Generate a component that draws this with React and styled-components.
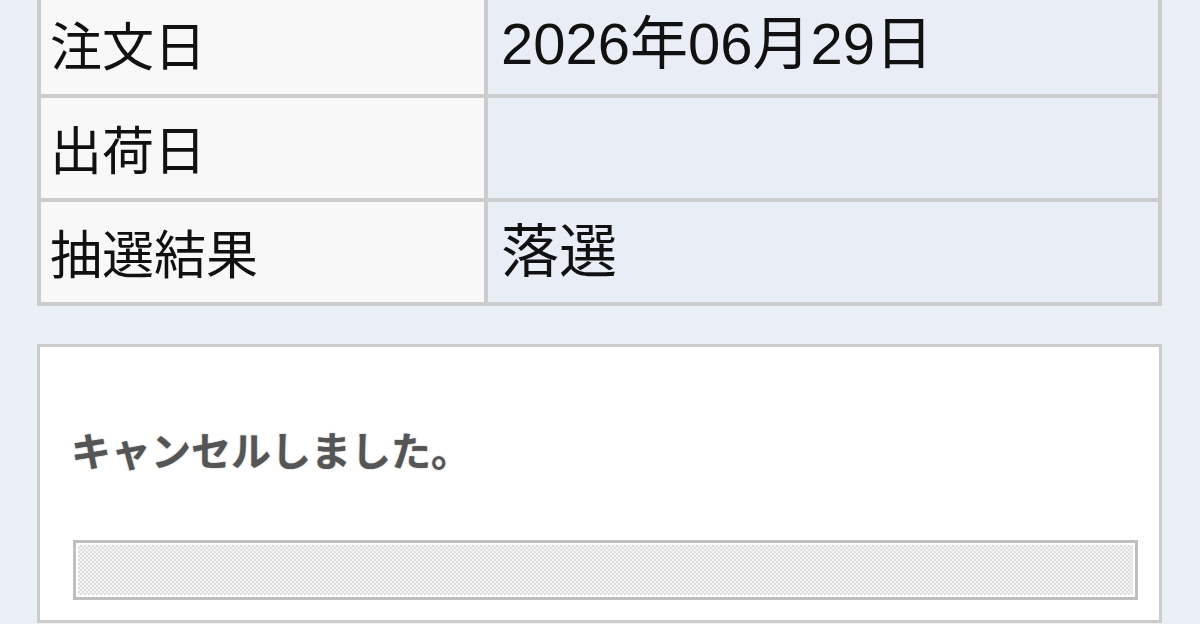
import styled, { createGlobalStyle } from 'styled-components';

const GlobalStyle = createGlobalStyle`
  html, body {
    margin: 0;
    padding: 0;
    background-color: #ebeff6;
  }
  body {
    font-family: 'Noto Sans CJK JP', sans-serif;
  }
`;

const Page = styled.div`
  height: 624px;
  overflow: hidden;
  padding: 0 38px 0 37px;
  box-sizing: border-box;
`;

const InfoTable = styled.table`
  width: 100%;
  margin-top: -10px;
  border: 4px solid #cccccc;
  border-spacing: 0;
  table-layout: fixed;
`;

const Row = styled.tr`
  &:not(:last-child) > * {
    border-bottom: 4px solid #cccccc;
  }
`;

const LabelCell = styled.th`
  width: 422px;
  height: 100px;
  padding: 0 12px 0 9px;
  box-sizing: content-box;
  background-color: #f8f8f8;
  border-right: 4px solid #cccccc;
  text-align: left;
  font-weight: 400;
  font-size: 52px;
  color: #111;
  line-height: 1;
`;

const ValueCell = styled.td`
  height: 100px;
  padding: 0 11px 0 13px;
  background-color: #e9eef6;
  font-family: 'Liberation Sans', 'Noto Sans CJK JP', sans-serif;
  font-size: 58px;
  color: #111;
  line-height: 1;
`;

const NoticeBox = styled.section`
  margin-top: 38px;
  border: 3px solid #cccccc;
  background-color: #ffffff;
  padding: 74px 21px 20px 33px;
`;

const Message = styled.p`
  margin: 0 0 0 -2px;
  font-size: 40px;
  font-weight: 700;
  line-height: 56px;
  color: #555555;
  text-shadow: 0 0 1.5px rgba(85, 85, 85, 0.6);
`;

const ProgressField = styled.div`
  margin-top: 63px;
  height: 54px;
  border: 3px solid #bfbfbf;
  box-shadow: inset 0 0 0 2px #ffffff;
  background-color: #eeeeee;
  background-image: repeating-conic-gradient(#dedede 0 25%, #f4f4f4 0 50%);
  background-size: 4px 4px;
`;

const rows = [
  { label: '注文日', value: '2026年06月29日' },
  { label: '出荷日', value: '' },
  { label: '抽選結果', value: '落選' },
];

export default function App() {
  return (
    <>
      <GlobalStyle />
      <Page>
        <InfoTable>
          <tbody>
            {rows.map((r) => (
              <Row key={r.label}>
                <LabelCell>{r.label}</LabelCell>
                <ValueCell>{r.value}</ValueCell>
              </Row>
            ))}
          </tbody>
        </InfoTable>
        <NoticeBox>
          <Message>キャンセルしました。</Message>
          <ProgressField />
        </NoticeBox>
      </Page>
    </>
  );
}
